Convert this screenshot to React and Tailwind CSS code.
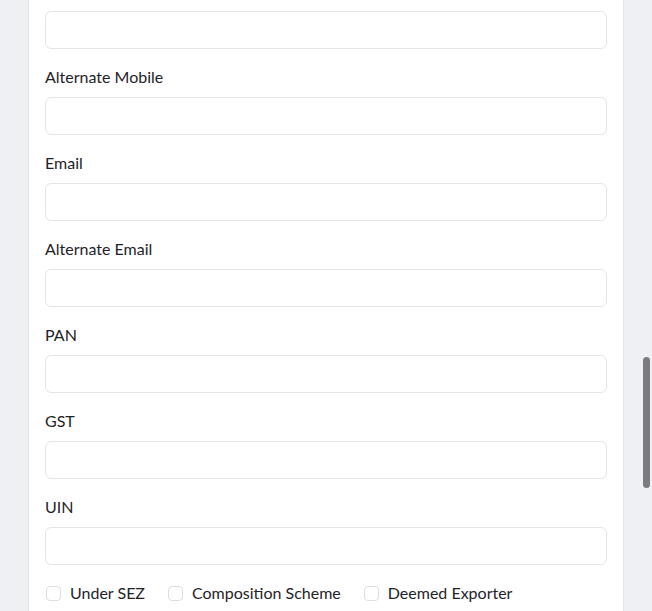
const fields = ["Alternate Mobile", "Email", "Alternate Email", "PAN", "GST", "UIN"];
const flags = ["Under SEZ", "Composition Scheme", "Deemed Exporter"];

function Field({ label }) {
  return (
    <div className="mt-4">
      <label className="block h-6 mb-2 text-[16px] leading-6 text-[#1f2328]">{label}</label>
      <input className="block w-full h-[38px] rounded-md border border-[#e3e5e8] bg-white px-3 outline-none" />
    </div>
  );
}

export default function App() {
  return (
    <div
      className="relative h-[611px] overflow-hidden bg-[#eef0f4]"
      style={{ fontFamily: "Lato, 'Open Sans', sans-serif" }}
    >
      {/* Form card (scrolled) */}
      <div className="ml-[28px] w-[596px] h-full bg-white border-x border-[#e2e4e8] px-4 pt-[11px]">
        <input className="block w-full h-[38px] rounded-md border border-[#e3e5e8] bg-white px-3 outline-none" />
        {fields.map((f) => (
          <Field key={f} label={f} />
        ))}
        <div className="mt-[16px] flex items-center gap-[22px] text-[16px] text-[#1f2328]">
          {flags.map((f) => (
            <label key={f} className="flex items-center gap-[9px]">
              <span className="ml-px w-[15px] h-[15px] rounded-[4px] border border-[#dcdee2] bg-white" />
              {f}
            </label>
          ))}
        </div>
      </div>

      {/* Scrollbar */}
      <div className="absolute right-[2px] top-[357px] w-[7px] h-[131px] rounded-full bg-[#7b7b80]" />
    </div>
  );
}
